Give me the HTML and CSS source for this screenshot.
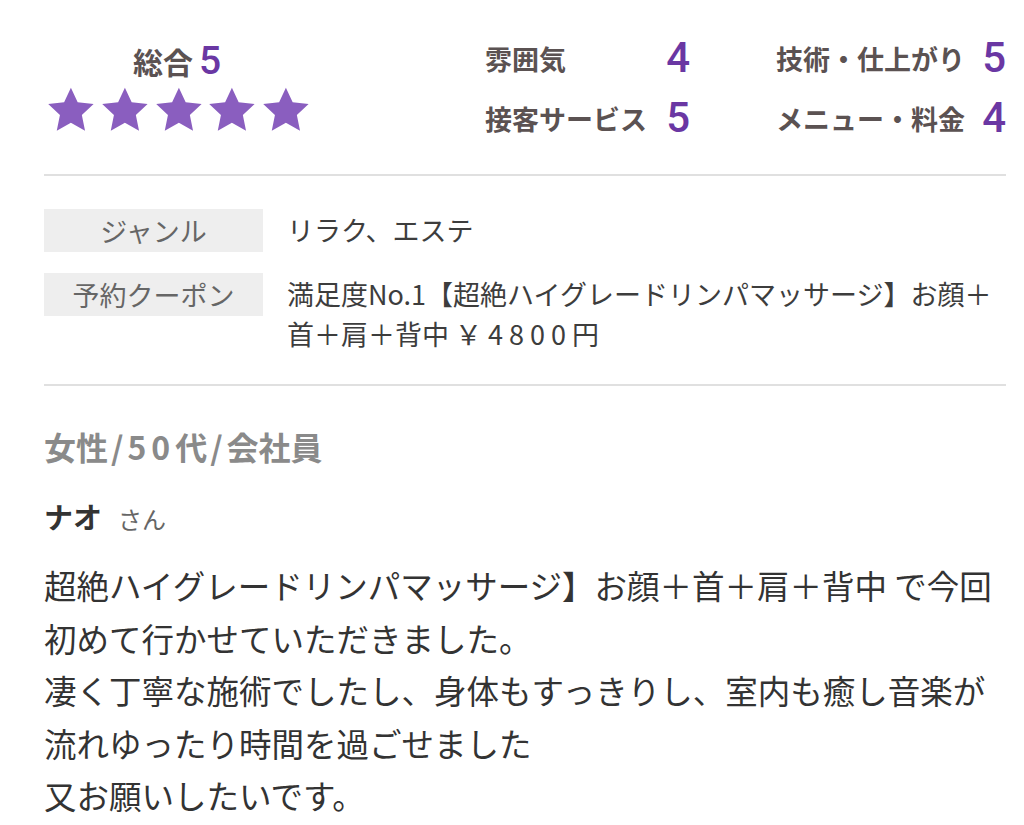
FILE: index.html
```html
<!DOCTYPE html>
<html lang="ja">
<head>
<meta charset="utf-8">
<title>口コミ</title>
<link rel="stylesheet" href="styles.css">
</head>
<body>
<div class="page">
  <section class="summary">
    <div class="overall">
      <div class="overall-title">総合<span class="num">5</span></div>
      <div class="stars">
        <svg class="star" viewBox="0 0 24 23"><path d="M12 0.6l3.4 7.3 8 .9-5.9 5.5 1.6 7.9L12 18.2l-7.1 4 1.6-7.9L.6 8.8l8-.9z"/></svg>
        <svg class="star" viewBox="0 0 24 23"><path d="M12 0.6l3.4 7.3 8 .9-5.9 5.5 1.6 7.9L12 18.2l-7.1 4 1.6-7.9L.6 8.8l8-.9z"/></svg>
        <svg class="star" viewBox="0 0 24 23"><path d="M12 0.6l3.4 7.3 8 .9-5.9 5.5 1.6 7.9L12 18.2l-7.1 4 1.6-7.9L.6 8.8l8-.9z"/></svg>
        <svg class="star" viewBox="0 0 24 23"><path d="M12 0.6l3.4 7.3 8 .9-5.9 5.5 1.6 7.9L12 18.2l-7.1 4 1.6-7.9L.6 8.8l8-.9z"/></svg>
        <svg class="star" viewBox="0 0 24 23"><path d="M12 0.6l3.4 7.3 8 .9-5.9 5.5 1.6 7.9L12 18.2l-7.1 4 1.6-7.9L.6 8.8l8-.9z"/></svg>
      </div>
    </div>
    <div class="scores">
      <div class="score"><span class="score-label">雰囲気</span><span class="score-num">4</span></div>
      <div class="score"><span class="score-label">技術・仕上がり</span><span class="score-num">5</span></div>
      <div class="score"><span class="score-label">接客サービス</span><span class="score-num">5</span></div>
      <div class="score"><span class="score-label">メニュー・料金</span><span class="score-num">4</span></div>
    </div>
  </section>

  <section class="info">
    <div class="info-row">
      <div class="info-label">ジャンル</div>
      <div class="info-value">リラク、エステ</div>
    </div>
    <div class="info-row">
      <div class="info-label">予約クーポン</div>
      <div class="info-value">満足度No.1【超絶ハイグレードリンパマッサージ】お顔＋<br>首＋肩＋背中 ￥<span class="price-digits">4800</span>円</div>
    </div>
  </section>

  <section class="review">
    <div class="reviewer-attr">女性<span class="sep">/</span><span class="attr-digits">50</span>代<span class="sep">/</span>会社員</div>
    <div class="reviewer-name"><span class="name">ナオ</span><span class="san">さん</span></div>
    <p class="review-body">超絶ハイグレードリンパマッサージ】お顔＋首＋肩＋背中 で今回<br>初めて行かせていただきました。<br>凄く丁寧な施術でしたし、身体もすっきりし、室内も癒し音楽が<br>流れゆったり時間を過ごせました<br>又お願いしたいです。</p>
  </section>
</div>
</body>
</html>
```

FILE: styles.css
```css
html, body {
  margin: 0;
  padding: 0;
  background: #ffffff;
}

body {
  font-family: "Noto Sans CJK JP", "Noto Sans", sans-serif;
  color: #333333;
}

.page {
  padding: 0 18px 0 44px;
}

.summary {
  display: flex;
  align-items: flex-start;
  padding: 28px 0 26px;
  border-bottom: 2px solid #e0e0e0;
}

.overall {
  width: 266px;
  margin-top: 12px;
  text-align: center;
}

.overall-title {
  font-size: 30px;
  font-weight: 700;
  color: #5b5252;
  line-height: 42px;
}

.overall-title .num {
  font-family: Roboto, "Liberation Sans", sans-serif;
  font-weight: 500;
  font-size: 39px;
  color: #6a37a3;
  margin-left: 6px;
}

.stars {
  display: flex;
  gap: 6px;
  margin-top: 4px;
  padding-left: 3px;
}

.star {
  width: 49px;
  height: 47px;
  fill: #8a5ebf;
}

.scores {
  margin-left: auto;
  display: grid;
  grid-template-columns: 205px 230px;
  column-gap: 86px;
  grid-auto-rows: 60px;
}

.score {
  display: flex;
  align-items: center;
  justify-content: space-between;
}

.score-label {
  font-size: 27px;
  font-weight: 700;
  color: #5b5252;
}

.score-num {
  font-family: Roboto, "Liberation Sans", sans-serif;
  font-weight: 500;
  font-size: 42px;
  color: #6a37a3;
  line-height: 1;
}

.info {
  display: flex;
  flex-direction: column;
  gap: 21px;
  padding: 33px 0 30px;
  border-bottom: 2px solid #e0e0e0;
}

.info-row {
  display: flex;
  align-items: flex-start;
}

.info-label {
  flex: 0 0 219px;
  height: 43px;
  line-height: 43px;
  background: #eeeeee;
  text-align: center;
  font-size: 27px;
  color: #666666;
}

.info-value {
  margin-left: 24px;
  padding-top: 1px;
  font-size: 27px;
  line-height: 40px;
  color: #3d3d3d;
}

.price-digits {
  letter-spacing: 6px;
  margin-left: 6px;
}

.review {
  padding-top: 40px;
}

.reviewer-attr {
  font-size: 32px;
  font-weight: 700;
  color: #8a8a8a;
  line-height: 40px;
}

.sep {
  margin: 0 4px 0 3px;
}

.attr-digits {
  letter-spacing: 5px;
}

.reviewer-name {
  margin-top: 30px;
  line-height: 40px;
  display: flex;
  align-items: baseline;
}

.name {
  font-size: 29px;
  font-weight: 700;
  color: #333333;
}

.san {
  font-size: 24px;
  color: #666666;
  margin-left: 16px;
}

.review-body {
  margin: 20px 0 0;
  font-size: 32.5px;
  line-height: 52.5px;
  color: #333333;
}
```
